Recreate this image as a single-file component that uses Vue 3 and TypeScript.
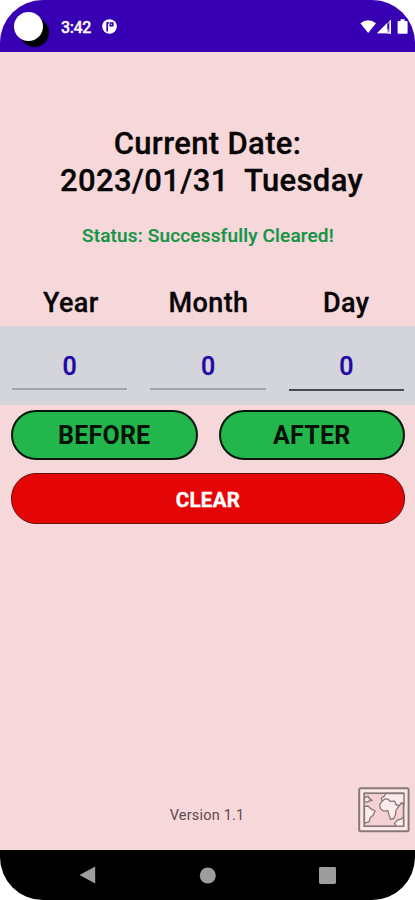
<script setup lang="ts">
import { ref } from 'vue'

interface Field { label: string; value: string }

const fields = ref<Field[]>([
  { label: 'Year', value: '0' },
  { label: 'Month', value: '0' },
  { label: 'Day', value: '0' },
])
const active = ref(2)
const currentDate = '2023/01/31\u00a0 Tuesday'
const status = ref('Status: Successfully Cleared!')

function clearFields(): void {
  fields.value.forEach((f) => { f.value = '0' })
}
</script>

<template>
  <div class="phone">
    <header class="statusbar">
      <span class="camera"></span>
      <span class="time">3:42</span>
      <svg class="badge" width="15" height="15" viewBox="0 0 15 15">
        <circle cx="7.5" cy="7.5" r="7.3" fill="#fff" />
        <path d="M5.2 12.4V3.8h2M8.6 4h2.2v2.8H8.2z" fill="none" stroke="#3700b3" stroke-width="1.6" />
      </svg>
      <svg class="signals" width="48" height="16" viewBox="0 0 48 16">
        <path d="M0.4 4.2Q8 -1.8 16 4.2L8.2 14z" fill="#fff" />
        <path d="M17 14.2L31 0.4V14.2z" fill="#fff" fill-opacity=".6" />
        <path d="M17 14.2L27.2 4.1V14.2z" fill="#fff" />
        <path d="M28.2 4.4v6.2" stroke="#3700b3" stroke-width="1.5" />
        <path d="M30.4 1v13.2h-3" fill="none" stroke="#fff" stroke-width="1.2" />
        <path d="M38.6 2h2V.3h4V2h2q1 0 1 1v10.7q0 1-1 1h-8q-1 0-1-1V3q0-1 1-1z" fill="#fff" />
      </svg>
    </header>
    <main class="content">
      <h1 class="date"><span class="caption">Current Date:</span><span class="today">{{ currentDate }}</span></h1>
      <p class="status">{{ status }}</p>
      <div class="labels">
        <span v-for="f in fields" :key="f.label">{{ f.label }}</span>
      </div>
      <div class="inputs">
        <div v-for="(f, i) in fields" :key="f.label" class="input" :class="{ active: i === active }" @click="active = i">{{ f.value }}</div>
      </div>
      <div class="actions">
        <button class="btn green before">BEFORE</button>
        <button class="btn green after">AFTER</button>
        <button class="btn red" @click="clearFields">CLEAR</button>
      </div>
      <footer class="footer">
        <span class="version">Version 1.1</span>
        <svg class="map" width="52" height="46" viewBox="0 0 52 46">
          <rect x="1.2" y="1.2" width="49.4" height="43" rx="1.5" fill="#fbe9e9" stroke="#887779" stroke-width="2" />
          <rect x="6.2" y="6.2" width="39.4" height="33" fill="#f5d0d4" stroke="#887779" stroke-width="1.7" />
          <g fill="#fbecec" stroke="#887779" stroke-width="1.3" stroke-linejoin="round">
            <path d="M6.5 9.5l2 .8 1.5-1.3 1 2.4 3.2 2-3.4.6-1.4 1.2-2.9-.6z" />
            <path d="M6.5 19.4l3.5-.4 2.3 2.4 4.8 2.6-2 4.2-2.7 2.3-1.4 4.3-4.5 1.3z" />
            <path d="M27.5 6.5l-1 2.5-3.2 2.2.8 3.2-2.4 3.1.7 4.3 3.1 2.3 4.4-.4 1 4.2 1.6 4.4 3.2-.8 1.8-4 .4-4 3.2-4.6-3.2-1.2 3.5 1 2.4-3.2 2.1 2.7V6.5z" />
            <path d="M24 14.2l3.3-2.4 3 .6 2.2 2 4.1-.2 2 4.1" fill="none" />
            <path d="M45.5 29.6l-2.3 2.4-3.3.8-3.4 3.6 1.8 2.8h7.2z" />
          </g>
        </svg>
      </footer>
    </main>
    <nav class="navbar">
      <svg width="17" height="18" viewBox="0 0 17 18"><path d="M16.2 .6v16.8L.5 9z" fill="#9d9d9d" /></svg>
      <svg width="17" height="17" viewBox="0 0 17 17"><circle cx="8.8" cy="8.5" r="8" fill="#9d9d9d" /></svg>
      <svg width="17" height="17" viewBox="0 0 17 17"><rect width="17" height="17" rx="1.4" fill="#9d9d9d" /></svg>
    </nav>
  </div>
</template>

<style>
body { background: #fff; }
</style>

<style scoped>
* { box-sizing: border-box; }
.phone {
  width: 415px; height: 900px; display: flex; flex-direction: column; overflow: hidden;
  border-radius: 43px; background: #f6d8da; font-family: Roboto, sans-serif; color: #080607;
}
.statusbar { height: 52px; flex: none; display: flex; align-items: flex-start; padding: 12px 7px 0 14px; background: #3700b3; color: #fff; }
.camera { width: 29px; height: 29px; border-radius: 50%; background: #fff; box-shadow: 6px 6px 1px #000; }
.time { margin: 6px 0 0 18px; width: 30px; font-size: 16px; line-height: 19px; font-weight: 500; white-space: nowrap; letter-spacing: -.4px; -webkit-text-stroke: .3px; }
.badge { margin: 7px 0 0 11px; }
.signals { margin: 7px 0 0 auto; }
.content { flex: 1; display: flex; flex-direction: column; }
.date { margin: 73px 0 0; height: 74px; display: flex; flex-direction: column; align-items: center; font-weight: 500; font-size: 31px; line-height: 37px; letter-spacing: .35px; white-space: nowrap; -webkit-text-stroke: .3px; }
.today { padding-left: 8px; }
.status { margin: 26px 0 0; height: 22px; padding-left: 1px; text-align: center; color: #169447; font-weight: 500; font-size: 19px; line-height: 22px; letter-spacing: .16px; -webkit-text-stroke: .2px; }
.labels { margin-top: 40px; height: 39px; padding: 0 0 0 2px; display: grid; grid-template-columns: repeat(3, 1fr); text-align: center; font-weight: 500; font-size: 27px; line-height: 32px; letter-spacing: .4px; -webkit-text-stroke: .3px; }
.inputs { height: 79px; background: #d3d5db; padding: 24px 11px 0 12px; display: grid; grid-template-columns: repeat(3, 1fr); gap: 23px; }
.input { height: 40px; border-bottom: 2px solid #a3a4a9; text-align: center; color: #2106a8; font-weight: 500; font-size: 25px; line-height: 34px; -webkit-text-stroke: .3px; }
.input.active { height: 41px; border-color: #484a50; }
.actions { padding: 5px 10px 0 11px; display: grid; grid-template-columns: 1fr 1fr; column-gap: 21px; row-gap: 13px; }
.btn { height: 51px; padding: 0; border-radius: 25px; font-family: inherit; font-weight: 700; }
.green { height: 50px; border: 2px solid #06150b; background: #23b64c; color: #031006; font-size: 25px; line-height: 30px; padding-top: 2px; letter-spacing: .2px; }
.red { grid-column: span 2; border: 1px solid #5c1713; background: #e40606; color: #fff; font-size: 20.5px; padding-top: 2px; letter-spacing: .3px; -webkit-text-stroke: .4px; }
.footer { flex: 1; display: grid; grid-template-columns: 1fr auto 1fr; align-items: end; padding: 0 5px 17px 4px; }
.version { grid-column: 2; margin-bottom: 8px; font-size: 14.5px; line-height: 18px; letter-spacing: .2px; color: #5d4a4d; }
.map { justify-self: end; }
.navbar { height: 50px; flex: none; display: flex; justify-content: space-between; align-items: center; padding: 0 79px; background: #000; }
</style>
